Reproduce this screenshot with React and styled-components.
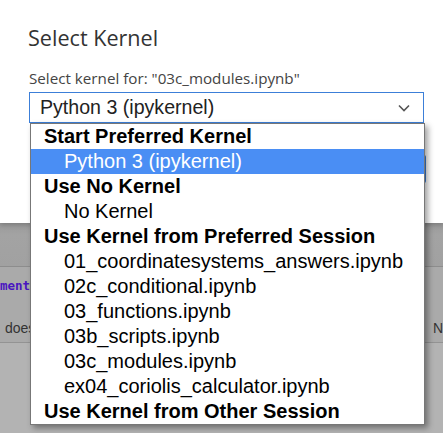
import React from 'react';
import styled, { createGlobalStyle } from 'styled-components';

const GlobalStyle = createGlobalStyle`
  html, body {
    margin: 0;
    padding: 0;
  }
  body {
    width: 443px;
    height: 433px;
    overflow: hidden;
    background: #b3b3b3;
  }
`;

const Screen = styled.div`
  position: relative;
  width: 443px;
  height: 433px;
  overflow: hidden;
  display: flex;
  flex-direction: column;
  background: #b3b3b3;
`;

const Dialog = styled.div`
  position: relative;
  z-index: 1;
  height: 223px;
  box-sizing: border-box;
  padding: 23px 17px 0 29px;
  display: flex;
  flex-direction: column;
  background: #fff;
  box-shadow: 0 2px 5px rgba(0, 0, 0, 0.2);
  font-family: 'Open Sans', 'Noto Sans', sans-serif;
`;

const Title = styled.div`
  font-size: 21.6px;
  line-height: 30px;
  color: #333;
  margin-left: -1px;
`;

const Label = styled.div`
  margin-top: 15px;
  font-size: 15.2px;
  line-height: 20px;
  color: #444;
`;

const SelectBox = styled.div`
  margin-top: 4px;
  width: 395px;
  height: 31px;
  box-sizing: border-box;
  border: 1px solid #3c7fd8;
  display: flex;
  align-items: center;
  justify-content: space-between;
  padding: 0 13px 0 10px;
  font-family: 'Liberation Sans', Arial, sans-serif;
  font-size: 19.6px;
  color: #222;
`;

const ButtonRow = styled.div`
  margin-top: 32px;
  display: flex;
  justify-content: flex-end;
`;

const PrimaryButton = styled.div`
  width: 84px;
  height: 28px;
  background: #3c7fd8;
  border-radius: 2px;
`;

const Backdrop = styled.div`
  flex: 1;
  display: flex;
  flex-direction: column;
  font-family: 'Liberation Sans', Arial, sans-serif;
`;

const Band = styled.div`
  height: 43px;
  background: linear-gradient(#999 0, #a3a3a3 12px, #a1a1a1 100%);
  border-bottom: 1px solid #8d8d8d;
`;

const CellRow = styled.div`
  height: 75px;
  display: flex;
  flex-direction: column;
  background: #aaa;
  border-bottom: 1px solid #939393;
`;

const CodeLine = styled.div`
  margin-top: 10px;
  height: 18px;
  font-family: 'DejaVu Sans Mono', 'Liberation Mono', monospace;
  font-weight: bold;
  font-size: 12.5px;
  line-height: 18px;
  color: #4a16c0;
`;

const DescLine = styled.div`
  margin-top: 24px;
  display: flex;
  justify-content: space-between;
  padding: 0 0 0 5px;
  font-size: 14px;
  line-height: 18px;
  color: #333;
`;

const Dropdown = styled.div`
  position: absolute;
  z-index: 2;
  left: 30px;
  top: 123px;
  width: 395px;
  box-sizing: border-box;
  border: 1px solid #777;
  background: #fff;
  box-shadow: 3px 3px 6px rgba(0, 0, 0, 0.38);
  font-family: 'Liberation Sans', Arial, sans-serif;
  font-size: 20px;
`;

const Option = styled.div`
  height: 25px;
  line-height: 25px;
  white-space: nowrap;
  padding-left: ${(p) => (p.$group ? '13px' : '33px')};
  font-weight: ${(p) => (p.$group ? 'bold' : 'normal')};
  color: ${(p) => (p.$selected ? '#fff' : '#000')};
  background: ${(p) => (p.$selected ? '#4a8ef4' : 'transparent')};
`;

const Chevron = () => (
  <svg width="12" height="8" viewBox="0 0 12 8">
    <polyline points="1,1.5 6,6.5 11,1.5" fill="none" stroke="#555" strokeWidth="1.6" />
  </svg>
);

const options = [
  { text: 'Start Preferred Kernel', group: true },
  { text: 'Python 3 (ipykernel)', selected: true },
  { text: 'Use No Kernel', group: true },
  { text: 'No Kernel' },
  { text: 'Use Kernel from Preferred Session', group: true },
  { text: '01_coordinatesystems_answers.ipynb' },
  { text: '02c_conditional.ipynb' },
  { text: '03_functions.ipynb' },
  { text: '03b_scripts.ipynb' },
  { text: '03c_modules.ipynb' },
  { text: 'ex04_coriolis_calculator.ipynb' },
  { text: 'Use Kernel from Other Session', group: true },
];

export default function App() {
  return (
    <Screen>
      <GlobalStyle />
      <Dialog>
        <Title>Select Kernel</Title>
        <Label>Select kernel for: "03c_modules.ipynb"</Label>
        <SelectBox>
          <span>Python 3 (ipykernel)</span>
          <Chevron />
        </SelectBox>
        <ButtonRow>
          <PrimaryButton />
        </ButtonRow>
      </Dialog>
      <Backdrop>
        <Band />
        <CellRow>
          <CodeLine>ment</CodeLine>
          <DescLine>
            <span>does</span>
            <span>N</span>
          </DescLine>
        </CellRow>
      </Backdrop>
      <Dropdown>
        {options.map((o) => (
          <Option key={o.text} $group={o.group} $selected={o.selected}>
            {o.text}
          </Option>
        ))}
      </Dropdown>
    </Screen>
  );
}
